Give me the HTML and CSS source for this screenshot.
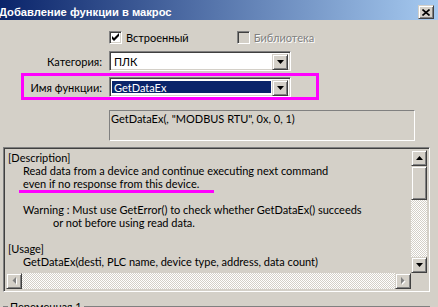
FILE: index.html
```html
<!DOCTYPE html>
<html>
    <head>
        <title>Добавление функции в макрос</title>
        <link rel="stylesheet" href="styles.css">
    </head>
    <body>
        <div class="window">
            <div class="titlebar">
                <span class="title">Добавление функции в макрос</span>
                <div class="close raised">
                    <svg width="8" height="7" viewBox="0 0 8 7"><path d="M0.5 0.5 L7.5 6.5 M7.5 0.5 L0.5 6.5" stroke="#000" stroke-width="1.6" fill="none"/></svg>
                </div>
            </div>

            <div class="checks">
                <div class="check">
                    <span class="box sunken">
                        <svg width="9" height="9" viewBox="0 0 9 9"><polygon points="1,3 3,5 8,0 8,3 3,8 1,6" fill="#000"/></svg>
                    </span>
                    Встроенный
                </div>
                <div class="check disabled">
                    <span class="box sunken"></span>
                    Библиотека
                </div>
            </div>

            <div class="field category">
                <span class="label">Категория:</span>
                <div class="combo sunken">
                    <span class="combo-text">ПЛК</span>
                    <span class="drop raised">
                        <svg width="7" height="4" viewBox="0 0 7 4"><polygon points="0,0 7,0 3.5,4" fill="#000"/></svg>
                    </span>
                </div>
            </div>

            <div class="highlight">
                <div class="field">
                    <span class="label">Имя функции:</span>
                    <div class="combo sunken">
                        <span class="combo-text selected">GetDataEx</span>
                        <span class="drop raised">
                            <svg width="7" height="4" viewBox="0 0 7 4"><polygon points="0,0 7,0 3.5,4" fill="#000"/></svg>
                        </span>
                    </div>
                </div>
            </div>

            <div class="preview">GetDataEx(, "MODBUS RTU", 0x, 0, 1)</div>

            <div class="edit sunken">
                <div class="edit-main">
                    <div class="edit-text">
                        <div>[Description]</div>
                        <div class="ind">Read data from a device and continue executing next command</div>
                        <div class="ind"><span class="marked">even if no response from this device.</span></div>
                        <div class="blank"></div>
                        <div class="ind">Warning : Must use GetError() to check whether GetDataEx() succeeds</div>
                        <div class="ind2">or not before using read data.</div>
                        <div class="blank"></div>
                        <div>[Usage]</div>
                        <div class="ind">GetDataEx(desti, PLC name, device type, address, data count)</div>
                    </div>
                    <div class="vscroll">
                        <div class="sbtn raised">
                            <svg width="7" height="4" viewBox="0 0 7 4"><polygon points="3.5,0 7,4 0,4" fill="#000"/></svg>
                        </div>
                        <div class="thumb raised"></div>
                        <div class="track"></div>
                        <div class="sbtn raised">
                            <svg width="7" height="4" viewBox="0 0 7 4"><polygon points="0,0 7,0 3.5,4" fill="#000"/></svg>
                        </div>
                    </div>
                </div>
                <div class="hscroll">
                    <div class="sbtn raised">
                        <svg width="5" height="8" viewBox="0 0 5 8"><polygon points="5,1 5,8 1.5,4.5" fill="#fff"/><polygon points="4,0 4,7 0.5,3.5" fill="#808080"/></svg>
                    </div>
                    <div class="track"></div>
                    <div class="sbtn raised">
                        <svg width="5" height="8" viewBox="0 0 5 8"><polygon points="1,1 1,8 4.5,4.5" fill="#fff"/><polygon points="0,0 0,7 3.5,3.5" fill="#808080"/></svg>
                    </div>
                    <div class="corner"></div>
                </div>
            </div>

            <fieldset class="group">
                <legend>Переменная 1</legend>
            </fieldset>
        </div>
    </body>
</html>
```

FILE: styles.css
```css
body {
    margin: 0;
    font-family: Lato, "Liberation Sans", Arial, sans-serif;
    font-size: 11px;
    color: #000;
    background: #d4d0c8;
}
.window {
    width: 438px;
    height: 307px;
    overflow: hidden;
    background: #d4d0c8;
}

/* classic 3d edges */
.sunken {
    border: 1px solid;
    border-color: #808080 #fff #fff #808080;
    box-shadow: inset 1px 1px #404040, inset -1px -1px #d4d0c8;
}
.raised {
    background: #d4d0c8;
    border: 1px solid;
    border-color: #d4d0c8 #404040 #404040 #d4d0c8;
    box-shadow: inset 1px 1px #fff, inset -1px -1px #808080;
}

.titlebar {
    height: 20px;
    display: flex;
    justify-content: space-between;
    align-items: flex-start;
    background: linear-gradient(to right, #0a246a, #a6caf0);
}
.title {
    color: #fff;
    font-family: "Liberation Sans", Arial, sans-serif;
    font-weight: bold;
    font-size: 11.2px;
    line-height: 14px;
    margin: 5px 0 0 -1px;
    white-space: nowrap;
}
.close {
    box-sizing: border-box;
    width: 16px;
    height: 14px;
    margin: 5px 4px 0 0;
    display: flex;
    align-items: center;
    justify-content: center;
}

.checks {
    display: flex;
    margin: 11px 0 0 109px;
    height: 13px;
}
.check {
    display: flex;
    align-items: center;
    gap: 4px;
    line-height: 13px;
}
.check + .check {
    margin-left: 48px;
}
.box {
    box-sizing: border-box;
    width: 13px;
    height: 13px;
    background: #fff;
    display: flex;
    align-items: center;
    justify-content: center;
}
.disabled {
    color: #808080;
    text-shadow: 1px 1px #fff;
}
.disabled .box {
    background: #d4d0c8;
}

.field {
    display: flex;
    align-items: center;
    gap: 7px;
}
.field .label {
    text-align: right;
    width: 78px;
}
.category {
    margin-top: 7px;
}
.category .label {
    width: 102px;
}
.combo {
    box-sizing: border-box;
    width: 182px;
    height: 20px;
    background: #fff;
    padding: 2px;
    display: flex;
}
.combo-text {
    flex: 1;
    line-height: 14px;
    margin: 1px 1px 1px 0;
    padding-left: 2px;
}
.combo-text.selected {
    background: #0a246a;
    color: #fff;
}
.drop {
    box-sizing: border-box;
    width: 16px;
    height: 16px;
    display: flex;
    align-items: center;
    justify-content: center;
}

.highlight {
    box-sizing: border-box;
    width: 298px;
    height: 27px;
    margin: 2px 0 0 21px;
    border: 3px solid #ff00ff;
    padding-top: 1px;
}

.preview {
    box-sizing: border-box;
    width: 306px;
    height: 31px;
    margin: 10px 0 0 109px;
    border: 1px solid;
    border-color: #808080 #fff #fff #808080;
    padding: 1px 1px;
    line-height: 13px;
}

.edit {
    box-sizing: border-box;
    width: 427px;
    height: 145px;
    margin: 6px 0 0 3px;
    padding: 2px;
    display: flex;
    flex-direction: column;
}
.edit-main {
    flex: 1;
    display: flex;
    min-height: 0;
}
.edit-text {
    flex: 1;
    overflow: hidden;
    white-space: nowrap;
    padding: 1px 0 0 2px;
    line-height: 13px;
}
.edit-text .blank {
    height: 13px;
}
.edit-text .ind {
    padding-left: 15px;
}
.edit-text .ind2 {
    padding-left: 45px;
}
.marked {
    position: relative;
}
.marked::after {
    content: "";
    position: absolute;
    left: -4px;
    top: 13px;
    width: 195px;
    height: 3px;
    background: #ff00ff;
}

.vscroll {
    width: 16px;
    display: flex;
    flex-direction: column;
}
.hscroll {
    height: 16px;
    display: flex;
}
.sbtn {
    box-sizing: border-box;
    width: 16px;
    height: 16px;
    flex: none;
    display: flex;
    align-items: center;
    justify-content: center;
}
.thumb {
    box-sizing: border-box;
    height: 34px;
    flex: none;
}
.track {
    flex: 1;
    background-color: #fff;
    background-image: conic-gradient(#d4d0c8 25%, #fff 0 50%, #d4d0c8 0 75%, #fff 0);
    background-size: 2px 2px;
}
.corner {
    width: 16px;
    background: #d4d0c8;
}

.group {
    margin: 8px 8px 0 3px;
    padding: 0;
    height: 40px;
    border: 1px solid #808080;
    box-shadow: 1px 1px #fff, inset 1px 1px #fff;
}
.group legend {
    margin-left: 4px;
    padding: 0 2px;
    line-height: 13px;
    background: #d4d0c8;
}
```
